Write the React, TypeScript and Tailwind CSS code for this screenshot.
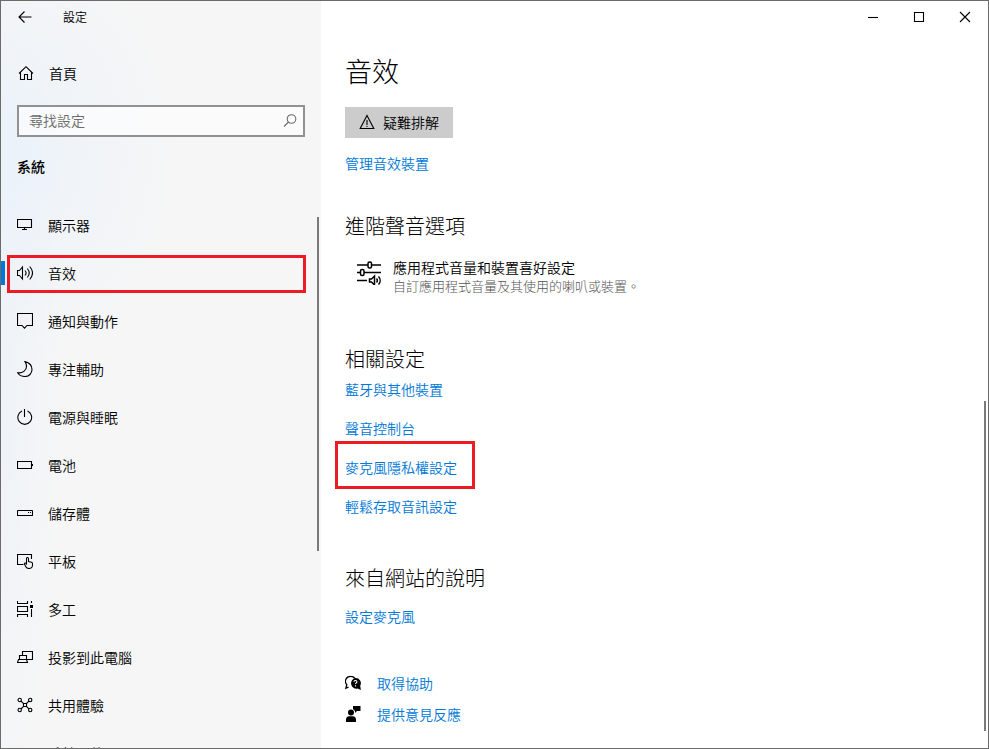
import React from "react";

type IconProps = {
  children: React.ReactNode;
  className?: string;
  box?: string;
};

const Icon = ({ children, className = "size-4", box = "0 0 16 16" }: IconProps) => (
  <svg
    viewBox={box}
    className={`shrink-0 ${className}`}
    fill="none"
    stroke="currentColor"
    strokeWidth="1.1"
    aria-hidden="true"
  >
    {children}
  </svg>
);

const navItems = [
  {
    label: "顯示器",
    icon: <path d="M.5 2.5h14v8H.5zM7.5 11v2M5 12.5h5" />,
  },
  {
    label: "音效",
    active: true,
    icon: (
      <path d="M.5 5.500h2l3-3.500v12l-3-3.500h-2zM8 5.500c1.300 1.500 1.300 3.500 0 5M10.300 3.500c2.300 2.700 2.300 6.300 0 9M12.700 1.500c3.500 4 3.500 9 0 13" />
    ),
  },
  {
    label: "通知與動作",
    icon: <path d="M.5.5h15v12H10l-2.500 2.700L5 12.500H.5z" />,
  },
  {
    label: "專注輔助",
    icon: (
      <path d="M8 .6c4.200 1 7 4 7 7.900 0 4-3 7-7 7-3.200 0-6-1.500-7.400-3.800C5.500 12.500 9.500 9.500 9.500 5.500 9.500 3.500 9 2 8 .6z" />
    ),
  },
  {
    label: "電源與睡眠",
    icon: <path d="M7.500 0v8M5 2.100a6.900 6.900 0 1 0 5.500 0" />,
  },
  {
    label: "電池",
    icon: <path d="M.5 4.500h14v7H.5zM15.500 7v2" />,
  },
  {
    label: "儲存體",
    icon: (
      <>
        <rect x=".5" y="5.500" width="15" height="5" rx=".5" />
        <path d="M11 7.500h1M13 7.500h1" />
      </>
    ),
  },
  {
    label: "平板",
    icon: (
      <path d="M6.500 11.500H.5v-10h14V6M9.500 11V5.500c0-1.400 2-1.400 2 0v3l3 .8c.8.300 1 .8 1 1.500v1.500c0 2-1.400 3.200-3.500 3.200s-2.900-.9-3.500-2.200l-1-2.300c-.3-1 1-1.300 1.500-.5z" />
    ),
  },
  {
    label: "多工",
    icon: (
      <>
        <path d="M.5 0v2.500h10V0M.5 5.500h10v5H.5zM.5 16v-2.500h10V16M14.500 0v2M14.500 8v8" />
        <path d="M13 4h3v3h-3z" fill="currentColor" stroke="none" />
      </>
    ),
  },
  {
    label: "投影到此電腦",
    icon: <path d="M5.500 6V2.500h10v8H10M2.500 10.500v-4h7v4M2.500 10.500h7l1 3H.5l1-3z" />,
  },
  {
    label: "共用體驗",
    icon: (
      <>
        <circle cx="2.700" cy="3" r="1.700" />
        <circle cx="13.200" cy="3" r="1.700" />
        <circle cx="2.700" cy="13" r="1.700" />
        <circle cx="13.200" cy="13" r="1.700" />
        <path d="M6.500 6.500h3v3h-3zM4 4.200l2.500 2.300M12 4.200L9.500 6.500M4 11.800l2.500-2.300M12 11.800L9.500 9.500" />
      </>
    ),
  },
  {
    label: "系統元件",
    icon: null,
  },
];

const relatedLinks = ["藍牙與其他裝置", "聲音控制台", "麥克風隱私權設定", "輕鬆存取音訊設定"];

const SectionTitle = ({ children, className }: { children: React.ReactNode; className: string }) => (
  <h2 className={`text-xl leading-7 font-light ${className}`}>{children}</h2>
);

const TextLink = ({ children }: { children: React.ReactNode }) => (
  <a href="#" className="text-sm leading-5 text-[#0078d7]">
    {children}
  </a>
);

const Sidebar = () => (
  <aside className="flex w-80 shrink-0 flex-col bg-[#f6f6f6] bg-[radial-gradient(ellipse_180px_220px_at_0_150px,#ebf2fa,#f6f6f600),radial-gradient(ellipse_60px_420px_at_0_400px,#eef3f8,#f6f6f600)]">
    <div className="flex h-8 shrink-0 items-center pl-4">
      <button type="button" aria-label="上一頁" className="flex w-[46px] items-center">
        <Icon>
          <path d="M14.500 8H2.500M7.500 2.500L2 8l5.500 5.500" />
        </Icon>
      </button>
      <span className="text-xs">設定</span>
    </div>

    <a href="#" className="mt-4 flex h-12 shrink-0 items-center gap-[15px] pl-[17px] text-sm">
      <Icon>
        <path d="M1 8.500L8 1.700l7 6.800M2.500 7.500v7h4v-5h3v5h4v-7" />
      </Icon>
      首頁
    </a>

    <div className="mx-4 mt-2 flex h-8 shrink-0 items-center border-2 border-[#919191] bg-white/60 pr-[5px] text-[#6b6b6b]">
      <input
        type="text"
        aria-label="尋找設定"
        placeholder="尋找設定"
        className="min-w-0 flex-1 bg-transparent pb-[3px] pl-2.5 text-sm outline-none placeholder:text-[#6b6b6b]"
      />
      <Icon>
        <circle cx="9.500" cy="6" r="4.300" />
        <path d="M6.500 9L2 13.500" />
      </Icon>
    </div>

    <h3 className="mt-[19px] mb-[25px] pl-4 text-sm leading-5 font-medium">系統</h3>

    <div className="flex min-h-0 flex-1">
      <nav className="min-w-0 flex-1 overflow-hidden">
        {navItems.map((item) => (
          <a
            key={item.label}
            href="#"
            className="relative flex h-12 items-center gap-[15px] pl-4 text-sm"
          >
            {item.active && (
              <>
                <span className="absolute top-3 left-0 h-6 w-1 bg-[#0078d7]" />
                <span className="absolute top-1.5 right-[11px] bottom-1 left-1.5 border-3 border-[#ed1c24]" />
              </>
            )}
            <Icon>{item.icon}</Icon>
            {item.label}
          </a>
        ))}
      </nav>
      <div className="mt-4 mr-0.5 h-[61%] w-0.5 bg-[#7a7a7a]" />
    </div>
  </aside>
);

const WindowControls = () => (
  <div className="flex h-8 justify-end">
    <button type="button" aria-label="最小化" className="flex w-[46px] items-center justify-center">
      <Icon>
        <path d="M3 8.500h10" />
      </Icon>
    </button>
    <button type="button" aria-label="最大化" className="flex w-[46px] items-center justify-center">
      <Icon>
        <path d="M3.500 3.500h9v9h-9z" />
      </Icon>
    </button>
    <button type="button" aria-label="關閉" className="flex w-[46px] items-center justify-center">
      <Icon>
        <path d="M3 3l10 10M13 3L3 13" />
      </Icon>
    </button>
  </div>
);

const SoundSettings = () => (
  <main className="flex flex-col items-start pl-6">
    <h1 className="mt-[18px] text-[27px] leading-10 font-light">音效</h1>
    <button
      type="button"
      className="mt-4 flex h-[31px] items-center gap-2 bg-[#cccccc] px-3.5 pb-px text-sm"
    >
      <Icon>
        <path d="M8 1.500l6.800 13H1.200zM8 6v5M8 12v1" />
      </Icon>
      疑難排解
    </button>
    <div className="mt-[15px] flex">
      <TextLink>管理音效裝置</TextLink>
    </div>

    <SectionTitle className="mt-[39px]">進階聲音選項</SectionTitle>
    <a href="#" className="mt-[17px] flex items-start gap-3 pl-3">
      <Icon className="mt-1 h-6 w-6" box="0 0 24 24">
        <g strokeWidth="1.500">
          <path d="M0 4h11M15 4h9M0 11.500h3M7 11.500h17M0 19.500h10" />
          <rect x="11" y="1" width="3.500" height="6" rx="1.500" />
          <rect x="3.500" y="8.500" width="3.500" height="6" rx="1.500" />
          <path d="M12.500 18h2l3-3v9l-3-3h-2zM19.500 17.500c1 1.200 1 2.800 0 4M21.500 15.500c2.200 2.300 2.200 5.700 0 8" />
        </g>
      </Icon>
      <span className="flex flex-col">
        <span className="text-sm leading-5">應用程式音量和裝置喜好設定</span>
        <span className="text-[13px] leading-[18px] font-light text-[#555555]">
          自訂應用程式音量及其使用的喇叭或裝置。
        </span>
      </span>
    </a>

    <SectionTitle className="mt-[50px]">相關設定</SectionTitle>
    <ul className="mt-1.5 flex flex-col gap-[19px]">
      {relatedLinks.map((label) => (
        <li key={label} className="relative flex">
          <TextLink>{label}</TextLink>
          {label === "麥克風隱私權設定" && (
            <span className="pointer-events-none absolute -top-4 -right-[18px] -bottom-3 -left-2.5 border-3 border-[#ed1c24]" />
          )}
        </li>
      ))}
    </ul>

    <SectionTitle className="mt-12">來自網站的說明</SectionTitle>
    <div className="mt-3.5 flex">
      <TextLink>設定麥克風</TextLink>
    </div>

    <ul className="mt-[47px] flex flex-col gap-[11px]">
      <li className="flex items-center gap-4">
        <Icon>
          <path d="M3.500 12.200L.9 13.200l.9-3.500A5 5 0 0 1 5.600 1.300c2 0 3.400.8 4.400 2.200" strokeWidth="1.300" />
          <path
            d="M10.500 3a5.200 5.200 0 0 1 4.700 7.700l.7 4.300-3.500-1.400A5.300 5.300 0 1 1 10.500 3z"
            fill="currentColor"
            stroke="none"
          />
          <path d="M8.900 6.800c.2-1.800 3.200-1.600 3 .1-.1 1-1.400 1-1.400 2.200M10.500 10.300v1.200" stroke="white" />
        </Icon>
        <TextLink>取得協助</TextLink>
      </li>
      <li className="flex items-center gap-4">
        <Icon>
          <g fill="currentColor" stroke="none">
            <circle cx="6" cy="6.500" r="3" />
            <path d="M1 16v-2.500c0-2 1.200-3.300 3-3.300h4c1.800 0 3 1.300 3 3.300V16zM8 0h7.500v5H12l-2 2V5L8 3z" />
          </g>
        </Icon>
        <TextLink>提供意見反應</TextLink>
      </li>
    </ul>
  </main>
);

const App = () => {
  return (
    <div className="flex h-screen overflow-hidden border border-[#6b6b6b] bg-white font-['Noto_Sans_CJK_TC',sans-serif] font-[350] text-black">
      <Sidebar />
      <div className="min-w-0 flex-1">
        <WindowControls />
        <SoundSettings />
      </div>
      {/* page scrollbar, laid over the right edge below the window buttons */}
      <div className="pointer-events-none absolute right-[3px] bottom-[18px] h-[44%] w-0.5 bg-[#7a7a7a]" />
    </div>
  );
};

export default App;
